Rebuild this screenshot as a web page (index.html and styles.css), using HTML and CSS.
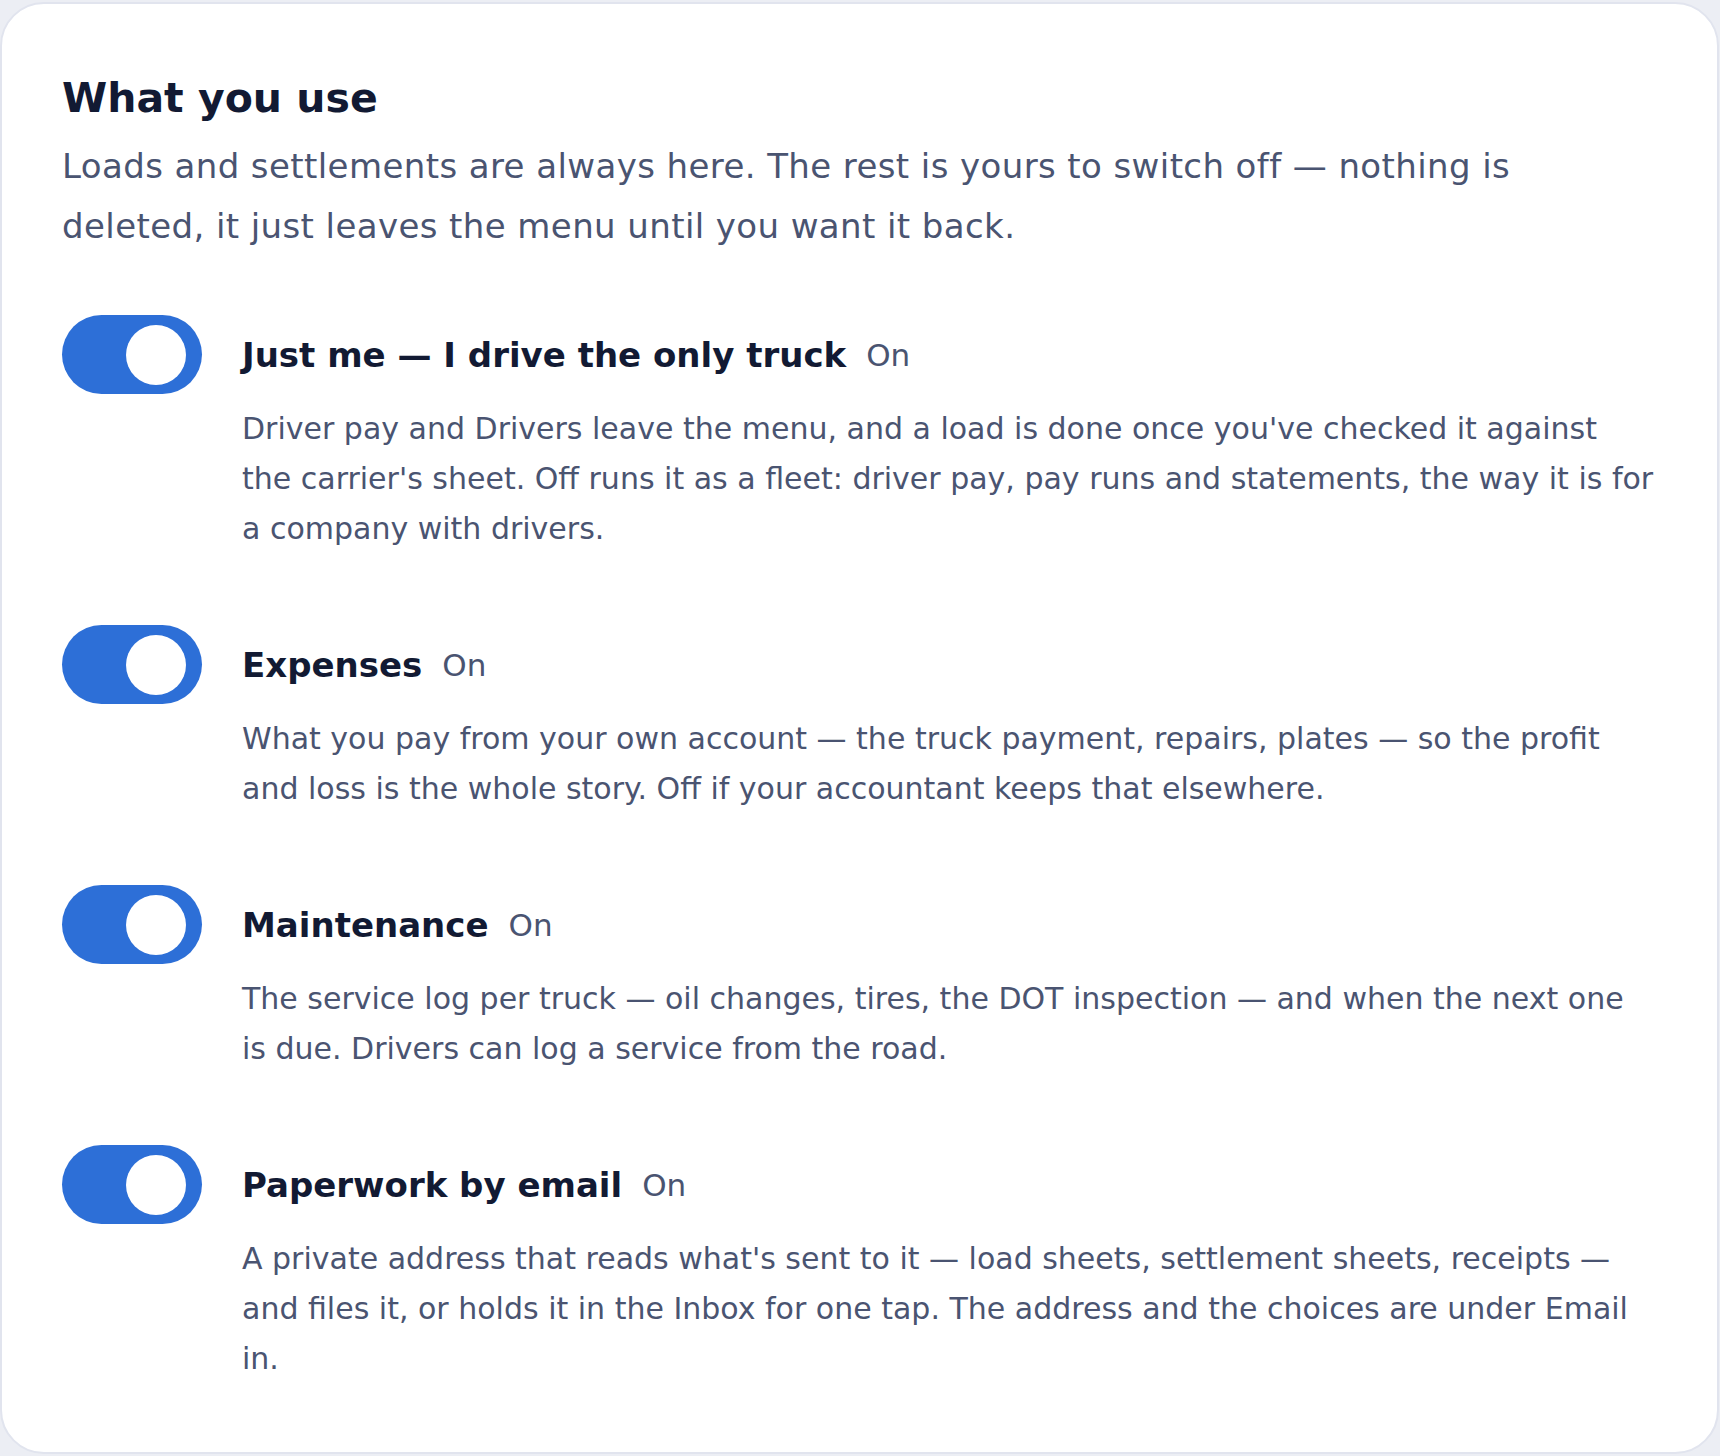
FILE: index.html
```html
<!DOCTYPE html>
<html>

<head>
  <meta charset="UTF-8">
  <title>What you use</title>
  <link rel="stylesheet" href="styles.css">
</head>

<body>
  <div class="card">
    <h1 class="title">What you use</h1>
    <p class="intro">Loads and settlements are always here. The rest is yours to switch off — nothing is deleted, it just leaves the menu until you want it back.</p>

    <div class="module">
      <span class="toggle on"><span class="knob"></span></span>
      <div class="moduleBody">
        <div class="moduleHead">
          <span class="moduleName">Just me — I drive the only truck</span>
          <span class="moduleState">On</span>
        </div>
        <p class="moduleText">Driver pay and Drivers leave the menu, and a load is done once you've checked it against the&nbsp;carrier's sheet. Off runs it as a fleet: driver pay, pay runs and statements, the way it is for a company with drivers.</p>
      </div>
    </div>

    <div class="module">
      <span class="toggle on"><span class="knob"></span></span>
      <div class="moduleBody">
        <div class="moduleHead">
          <span class="moduleName">Expenses</span>
          <span class="moduleState">On</span>
        </div>
        <p class="moduleText">What you pay from your own account — the truck payment, repairs, plates — so the profit and loss is the whole story. Off if your accountant keeps that elsewhere.</p>
      </div>
    </div>

    <div class="module">
      <span class="toggle on"><span class="knob"></span></span>
      <div class="moduleBody">
        <div class="moduleHead">
          <span class="moduleName">Maintenance</span>
          <span class="moduleState">On</span>
        </div>
        <p class="moduleText">The service log per truck — oil changes, tires, the DOT inspection — and when the next one is&nbsp;due. Drivers can log a service from the road.</p>
      </div>
    </div>

    <div class="module">
      <span class="toggle on"><span class="knob"></span></span>
      <div class="moduleBody">
        <div class="moduleHead">
          <span class="moduleName">Paperwork by email</span>
          <span class="moduleState">On</span>
        </div>
        <p class="moduleText">A private address that reads what's sent to it — load sheets, settlement sheets, receipts — and files it, or holds it in the Inbox for one tap. The address and the choices are under Email in.</p>
      </div>
    </div>
  </div>
</body>

</html>
```

FILE: styles.css
```css
body {
  margin: 0;
  background-color: #eceef4;
  font-family: "DejaVu Sans", "Noto Sans", sans-serif;
}

.card {
  box-sizing: border-box;
  min-height: 1452px;
  margin-top: 2px;
  margin-right: 1px;
  padding: 70px 60px 68px 60px;
  background-color: #ffffff;
  border: 2px solid #e1e4ee;
  border-radius: 44px;
}

.title {
  margin: 0;
  font-size: 41px;
  line-height: 48px;
  font-weight: 700;
  color: #121a33;
}

.intro {
  max-width: 1500px;
  margin: 14px 0 0 0;
  font-size: 34px;
  line-height: 60px;
  letter-spacing: 0.4px;
  color: #4a5471;
}

.module {
  display: flex;
  gap: 40px;
  margin-top: 59px;
}

.module + .module {
  margin-top: 71px;
}

.toggle {
  flex: none;
  box-sizing: border-box;
  width: 140px;
  height: 79px;
  padding: 10px 16px 9px 10px;
  border-radius: 40px;
  background-color: #d3d8e3;
  display: flex;
}

.toggle.on {
  background-color: #2d6fd7;
  justify-content: flex-end;
}

.knob {
  width: 60px;
  height: 60px;
  border-radius: 50%;
  background-color: #ffffff;
}

.moduleBody {
  flex: 1;
}

.moduleHead {
  height: 79px;
  display: flex;
  align-items: center;
  gap: 20px;
}

.moduleName {
  font-size: 34px;
  font-weight: 700;
  color: #121a33;
}

.moduleState {
  font-size: 31px;
  color: #4a5471;
}

.moduleText {
  margin: 10px 0 0 0;
  font-size: 30px;
  line-height: 50px;
  color: #4a5471;
}
```
